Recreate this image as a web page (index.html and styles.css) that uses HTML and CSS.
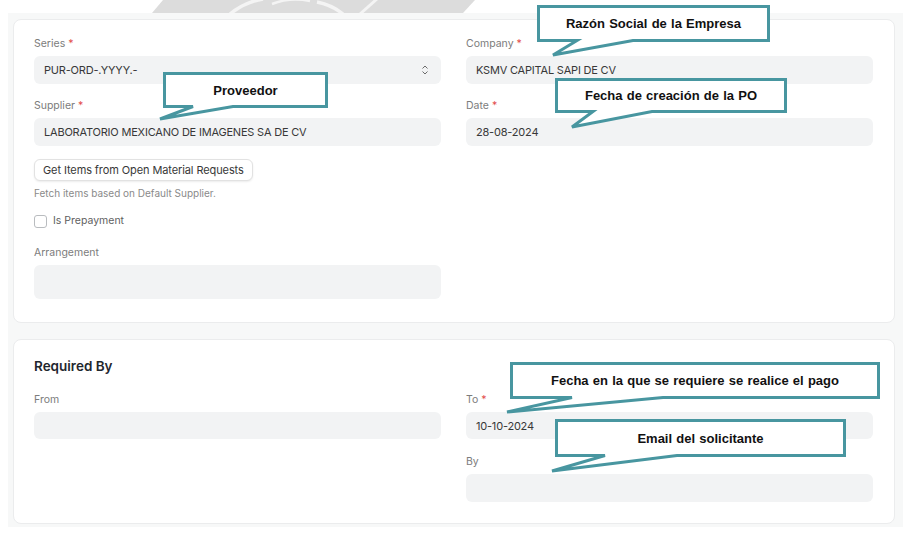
FILE: index.html
```html
<!DOCTYPE html>
<html lang="es">
  <head>
    <meta charset="UTF-8" />
    <meta name="viewport" content="width=device-width, initial-scale=1.0" />
    <title>Purchase Order</title>
    <link rel="stylesheet" href="styles.css">
  </head>
  <body>
    <div class="frame">
      <div class="top-strip">
        <svg class="watermark" width="330" height="13" viewBox="0 0 330 13">
          <polygon points="13,0 325,0 313,13 2,13" fill="#dcdcdc" />
          <path d="M80 14 Q 95 2, 113 -1" stroke="#f4f4f4" stroke-width="3.5" fill="none" />
          <path d="M122 4 Q 140 -3, 160 1" stroke="#f4f4f4" stroke-width="2.5" fill="none" />
          <path d="M167 2 Q 182 5, 193 14" stroke="#f4f4f4" stroke-width="3.5" fill="none" />
          <path d="M210 14 L 227 -1" stroke="#f4f4f4" stroke-width="3" fill="none" />
        </svg>
      </div>

      <div class="page">
        <section class="card card-main">
          <div class="col">
            <div class="field">
              <label>Series <span class="req">*</span></label>
              <div class="control select">
                PUR-ORD-.YYYY.-
                <svg class="select-arrow" width="8" height="12" viewBox="0 0 8 12">
                  <path d="M1.5 4.5 L4 2 L6.5 4.5 M1.5 7.5 L4 10 L6.5 7.5" stroke="#6b6b6b" stroke-width="1" fill="none" />
                </svg>
              </div>
            </div>
            <div class="field">
              <label>Supplier <span class="req">*</span></label>
              <div class="control">LABORATORIO MEXICANO DE IMAGENES SA DE CV</div>
            </div>
            <button class="btn">Get Items from Open Material Requests</button>
            <p class="help">Fetch items based on Default Supplier.</p>
            <div class="check-row">
              <span class="checkbox"></span>
              <span>Is Prepayment</span>
            </div>
            <div class="field field-arrangement">
              <label>Arrangement</label>
              <div class="control textarea"></div>
            </div>
          </div>
          <div class="col">
            <div class="field">
              <label>Company <span class="req">*</span></label>
              <div class="control">KSMV CAPITAL SAPI DE CV</div>
            </div>
            <div class="field">
              <label>Date <span class="req">*</span></label>
              <div class="control">28-08-2024</div>
            </div>
          </div>
        </section>

        <section class="card card-required">
          <h3 class="section-title">Required By</h3>
          <div class="cols">
            <div class="col">
              <div class="field">
                <label>From</label>
                <div class="control short"></div>
              </div>
            </div>
            <div class="col">
              <div class="field">
                <label>To <span class="req">*</span></label>
                <div class="control short">10-10-2024</div>
              </div>
              <div class="field field-by">
                <label>By</label>
                <div class="control"></div>
              </div>
            </div>
          </div>
        </section>
      </div>

      <div class="callout callout-proveedor">
        <svg width="165" height="36"><path d="M1.5 1.5 H163.5 V34.5 H70 L-3 47 L30 34.5 H1.5 Z" /></svg>
        <span>Proveedor</span>
      </div>
      <div class="callout callout-empresa">
        <svg width="233" height="37"><path d="M1.5 1.5 H231.5 V35.5 H96 L16 50 L40 35.5 H1.5 Z" /></svg>
        <span>Razón Social de la Empresa</span>
      </div>
      <div class="callout callout-fecha">
        <svg width="232" height="35"><path d="M1.5 1.5 H230.5 V33.5 H97 L17 49 L38 33.5 H1.5 Z" /></svg>
        <span>Fecha de creación de la PO</span>
      </div>
      <div class="callout callout-pago">
        <svg width="370" height="37"><path d="M1.5 1.5 H368.5 V35.5 H153 L-3 50 L62 35.5 H1.5 Z" /></svg>
        <span>Fecha en la que se requiere se realice el pago</span>
      </div>
      <div class="callout callout-email">
        <svg width="291" height="38"><path d="M1.5 1.5 H289.5 V36.5 H122 L-3 52 L50 36.5 H1.5 Z" /></svg>
        <span>Email del solicitante</span>
      </div>
    </div>
  </body>
</html>
```

FILE: styles.css
```css
body {
  margin: 0;
  background-color: #ffffff;
  font-family: Inter, "Noto Sans", sans-serif;
  color: #383838;
}

.frame {
  position: relative;
  width: 906px;
  height: 534px;
  overflow: hidden;
}

.top-strip {
  height: 13px;
}
.watermark {
  display: block;
  margin-left: 150px;
}

.page {
  margin-left: 8px;
  width: 895px;
  height: 514px;
  background-color: #f7f8f8;
  padding-top: 6px;
  box-sizing: border-box;
}

.card {
  width: 882px;
  margin-left: 5px;
  background-color: #ffffff;
  border: 1px solid #ebeced;
  border-radius: 8px;
  box-sizing: border-box;
  padding: 0 20px;
}
.card-main {
  display: flex;
  gap: 25px;
  padding-top: 17px;
  padding-bottom: 23px;
}
.card-required {
  margin-top: 16px;
  padding-top: 17px;
  padding-bottom: 21px;
}
.cols {
  display: flex;
  gap: 25px;
}
.col {
  width: 407px;
}

.section-title {
  margin: 0 0 18px;
  font-size: 13.5px;
  line-height: 18px;
  font-weight: 600;
  color: #1f272e;
}

.field {
  margin-bottom: 15px;
}
.field label {
  display: block;
  font-size: 10.5px;
  line-height: 14px;
  color: #7c7c7c;
  margin-bottom: 5px;
}
.req {
  color: #e24c4c;
}

.control {
  height: 28px;
  background-color: #f2f3f4;
  border-radius: 6px;
  padding: 0 10px;
  display: flex;
  align-items: center;
  font-size: 11px;
  letter-spacing: -0.2px;
  color: #383838;
  box-sizing: border-box;
}
.control.short {
  height: 27px;
}
.control.textarea {
  height: 34px;
}
.select {
  justify-content: space-between;
}
.select-arrow {
  margin-right: 2px;
}

.btn {
  display: block;
  margin-top: -2px;
  height: 22px;
  padding: 0 8px;
  background-color: #ffffff;
  border: 1px solid #e2e2e2;
  border-radius: 6px;
  box-shadow: 0 1px 2px rgba(0, 0, 0, 0.08);
  font-family: Inter, "Noto Sans", sans-serif;
  font-size: 11px;
  letter-spacing: -0.1px;
  color: #383838;
}
.help {
  margin: 5px 0 0;
  font-size: 10px;
  line-height: 14px;
  color: #8a8a8a;
}
.check-row {
  display: flex;
  align-items: center;
  gap: 6px;
  margin-top: 14px;
  font-size: 10.5px;
  line-height: 14px;
  color: #5f5f5f;
}
.checkbox {
  width: 11px;
  height: 11px;
  border: 1px solid #b9bcbf;
  border-radius: 3px;
  background-color: #ffffff;
}
.field-arrangement {
  margin-top: 18px;
  margin-bottom: 0;
}
.card-required .field {
  margin-bottom: 0;
}
.card-required .field-by {
  margin-top: 16px;
}

.callout {
  position: absolute;
  display: flex;
  align-items: center;
  justify-content: center;
  font-family: "Liberation Sans", Arial, sans-serif;
  font-weight: bold;
  font-size: 13px;
  word-spacing: 0.6px;
  color: #111111;
}
.callout svg {
  position: absolute;
  left: 0;
  top: 0;
  overflow: visible;
}
.callout path {
  fill: #ffffff;
  stroke: #4896a0;
  stroke-width: 3;
}
.callout span {
  position: relative;
}
.callout-proveedor {
  left: 163px;
  top: 72px;
  width: 165px;
  height: 36px;
}
.callout-empresa {
  left: 537px;
  top: 5px;
  width: 233px;
  height: 37px;
}
.callout-fecha {
  left: 555px;
  top: 78px;
  width: 232px;
  height: 35px;
}
.callout-pago {
  left: 510px;
  top: 362px;
  width: 370px;
  height: 37px;
}
.callout-email {
  left: 555px;
  top: 419px;
  width: 291px;
  height: 38px;
}
```
